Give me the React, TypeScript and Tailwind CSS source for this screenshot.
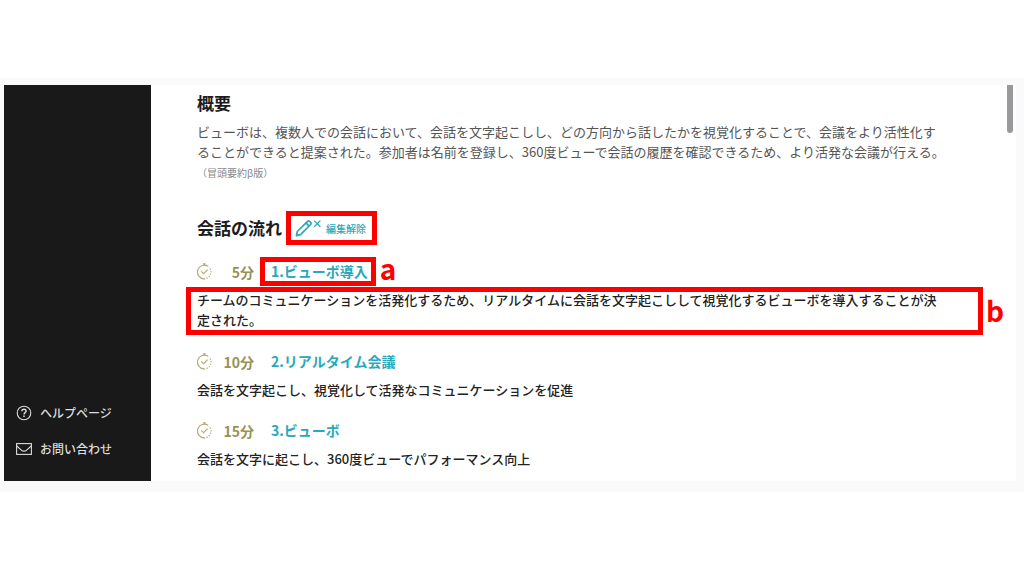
import React from 'react';

interface Topic {
  id: number;
  minutes: number;
  title: string;
  description: string;
  titleMark?: string;
  descriptionMark?: string;
}

const topics: Topic[] = [
  {
    id: 1,
    minutes: 5,
    title: 'ビューボ導入',
    description:
      'チームのコミュニケーションを活発化するため、リアルタイムに会話を文字起こしして視覚化するビューボを導入することが決定された。',
    titleMark: 'a',
    descriptionMark: 'b',
  },
  {
    id: 2,
    minutes: 10,
    title: 'リアルタイム会議',
    description: '会話を文字起こし、視覚化して活発なコミュニケーションを促進',
  },
  {
    id: 3,
    minutes: 15,
    title: 'ビューボ',
    description: '会話を文字に起こし、360度ビューでパフォーマンス向上',
  },
];

const HelpIcon = () => (
  <svg className="w-4 h-4 shrink-0" viewBox="0 0 16 16" fill="none" stroke="currentColor" strokeWidth="1.1">
    <circle cx="8" cy="8" r="6.8" />
    <path d="M5.9 6.3c0-1.3.9-2.1 2.1-2.1s2.1.8 2.1 1.9c0 1.5-2.1 1.6-2.1 3.3" strokeWidth="1.4" />
    <path d="M8 10.6v1.5" strokeWidth="1.5" />
  </svg>
);

const MailIcon = () => (
  <svg className="w-4 h-4 shrink-0" viewBox="0 0 16 16" fill="none" stroke="currentColor" strokeWidth="1.1">
    <rect x="0.6" y="2.6" width="14.8" height="10.8" />
    <path d="M0.8 5l4.6 4.2c1.6 1.2 3.6 1.2 5.2 0L15.2 5" />
  </svg>
);

const TimerIcon = () => (
  <svg className="w-4 h-5 shrink-0" viewBox="0 0 16 20" fill="none" stroke="#b5ac74" strokeWidth="1.2">
    <path d="M11.2 4.3A6.9 6.9 0 1 0 7 16.9" />
    <path d="M7 16.9A6.9 6.9 0 0 0 12 5.2" strokeDasharray="1.2 1.4" />
    <path d="M7.4 1v2.6" strokeWidth="2" />
    <path d="M4.2 9.4l2.4 2.2 4-4" />
  </svg>
);

const PencilOffIcon = () => (
  <svg className="w-7 h-5 shrink-0" viewBox="0 0 28 20" fill="none" stroke="currentColor" strokeWidth="1.7">
    <path
      d="M1.4 17.6l.9-4.1L12.5 3.3a1.5 1.5 0 0 1 2.1 0l1.1 1.1a1.5 1.5 0 0 1 0 2.1L5.5 16.7z"
      strokeLinejoin="round"
    />
    <path d="M10.9 4.9l3.2 3.2" />
    <path d="M19.2 2.6l6.2 6.2M25.4 2.6l-6.2 6.2" strokeWidth="1.3" />
  </svg>
);

const Sidebar: React.FC = () => (
  <nav className="w-[147px] shrink-0 flex flex-col justify-end gap-4 pl-3 pb-[22px] bg-[#191919] text-xs font-medium text-[#dcdcdc]">
    <a href="#help" className="flex items-center gap-2 h-5">
      <HelpIcon />
      ヘルプページ
    </a>
    <a href="#contact" className="flex items-center gap-2 h-5">
      <MailIcon />
      お問い合わせ
    </a>
  </nav>
);

const TopicItem: React.FC<{ topic: Topic }> = ({ topic }) => (
  <li>
    <div className="flex items-center h-[29px] text-sm leading-5 font-bold">
      <TimerIcon />
      <span className="w-[41px] text-right text-[#989255]">{topic.minutes}分</span>
      <button
        type="button"
        className={`ml-[6px] h-full border-[5px] pl-[6px] pr-[3px] pb-px flex items-center ${
          topic.titleMark ? 'border-[#ff0000]' : 'border-transparent'
        } text-[#2aa8bb]`}
      >
        {topic.id}.{topic.title}
      </button>
      {topic.titleMark && (
        <span className="ml-1 pb-2 text-[28px] leading-7 text-[#ff0000]">{topic.titleMark}</span>
      )}
    </div>
    {topic.descriptionMark ? (
      <div className="relative mt-px -ml-[11px] -mr-[38px] border-[5px] border-[#ff0000]">
        <p className="-mt-[2px] pl-[6px] pr-[33px] text-[13px] leading-5 font-medium text-[#222]">
          {topic.description}
        </p>
        <span className="absolute left-full top-0 ml-2 text-[28px] leading-9 font-bold text-[#ff0000]">
          {topic.descriptionMark}
        </span>
      </div>
    ) : (
      <p className="text-[13px] leading-7 font-medium text-[#222]">{topic.description}</p>
    )}
  </li>
);

const App: React.FC = () => {
  return (
    <div lang="ja" className="min-h-screen bg-white pt-[78px] font-['Noto_Sans_CJK_JP',sans-serif]">
      <div className="bg-[#fafafa] pt-[7px] pr-2 pb-[11px] pl-1">
        <div className="flex bg-white">
          <Sidebar />

          <main className="flex-1 min-w-0 pt-2 pb-2 pl-[46px] pr-[62px]">
            <section>
              <h2 className="text-[17px] leading-5 font-bold text-[#1c1c1c]">概要</h2>
              <p className="mt-[9px] text-[13px] leading-5 text-[#555]">
                ビューボは、複数人での会話において、会話を文字起こしし、どの方向から話したかを視覚化することで、会議をより活性化することができると提案された。参加者は名前を登録し、360度ビューで会話の履歴を確認できるため、より活発な会議が行える。
              </p>
              <p className="mt-px text-[10px] leading-5 text-[#888]">（冒頭要約β版）</p>
            </section>

            <section className="mt-7">
              <div className="flex items-center">
                <h2 className="text-[17px] leading-5 font-bold text-[#1c1c1c]">会話の流れ</h2>
                <button
                  type="button"
                  className="ml-1 h-[34px] border-[5px] border-[#ff0000] pl-1 pr-[6px] flex items-center gap-[3px] text-[10px] font-medium text-[#2aa8bb]"
                >
                  <PencilOffIcon />
                  編集解除
                </button>
              </div>
              <ul className="mt-3 flex flex-col gap-3">
                {topics.map(topic => (
                  <TopicItem key={topic.id} topic={topic} />
                ))}
              </ul>
            </section>
          </main>

          {/* Scrollbar */}
          <div className="w-[9px] shrink-0">
            <div className="w-[6px] h-12 rounded-b-full bg-[#99999b]"></div>
          </div>
        </div>
      </div>
    </div>
  );
};

export default App;
